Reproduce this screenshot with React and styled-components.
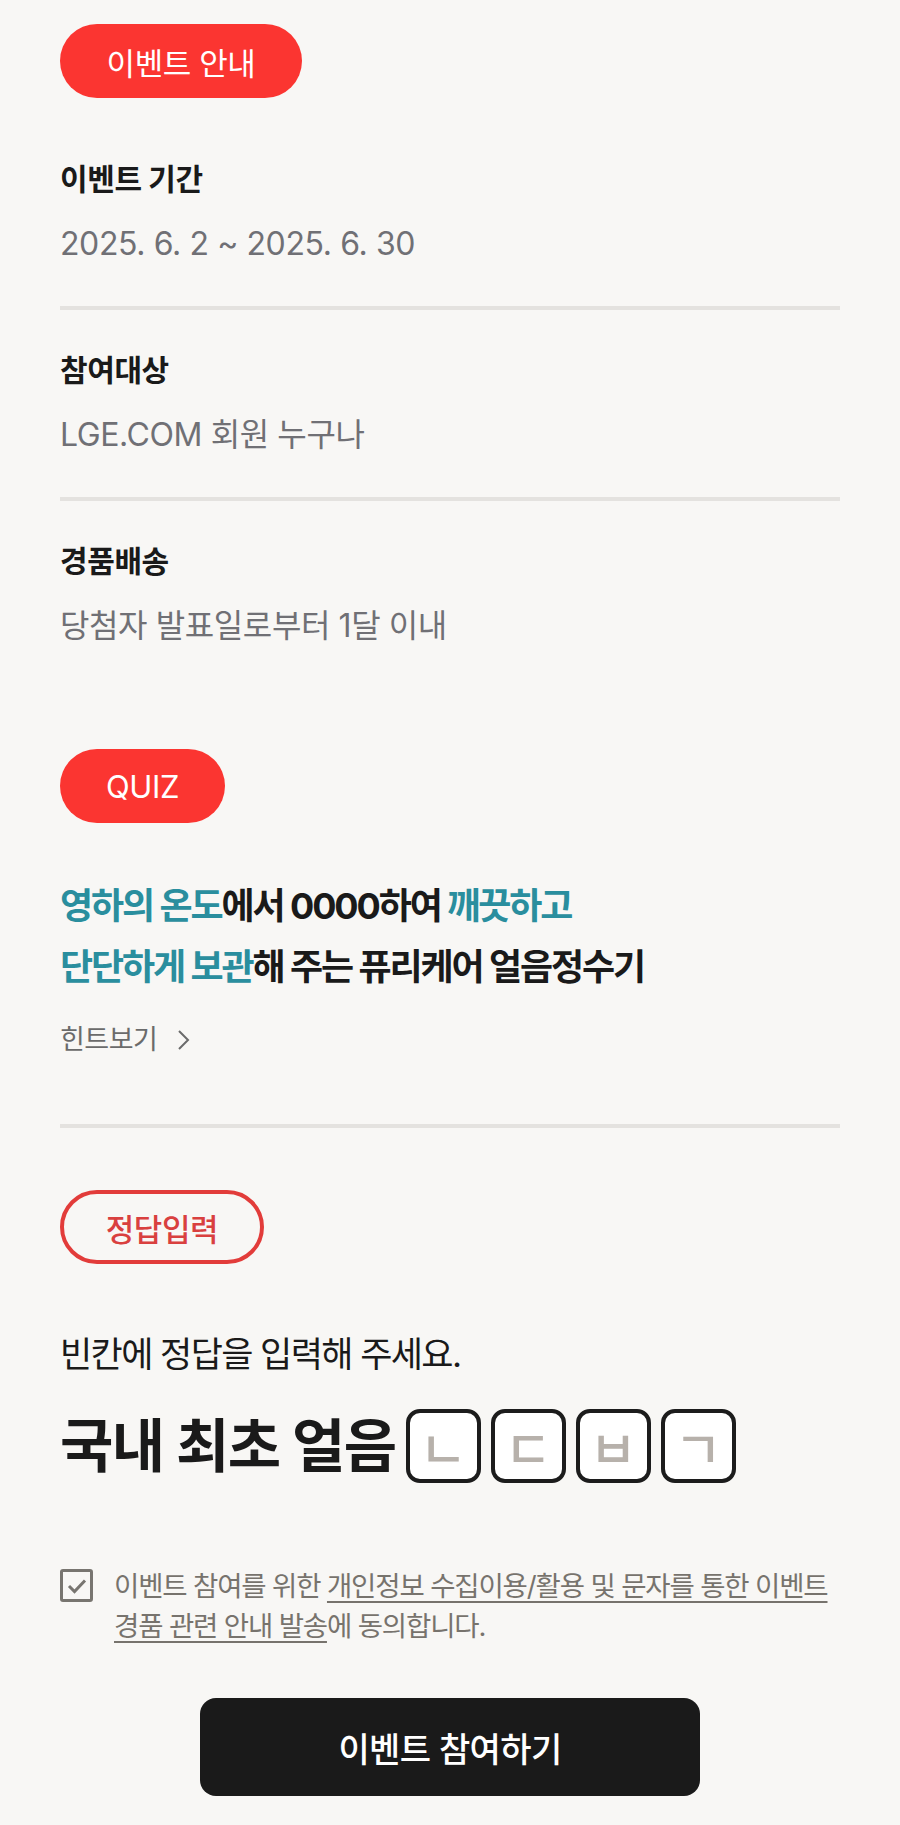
import styled, { createGlobalStyle } from "styled-components";
import { useState } from "react";

const GlobalStyle = createGlobalStyle`
  html, body {
    margin: 0;
    padding: 0;
    background: #f8f7f5;
  }
  body {
    font-family: "Inter", "Noto Sans CJK KR", "Noto Sans", sans-serif;
    color: #1a1a1a;
    word-break: keep-all;
  }
`;

const Page = styled.div`
  width: 900px;
  box-sizing: border-box;
  padding: 24px 60px 31px;
  display: flex;
  flex-direction: column;
`;

const Pill = styled.div`
  align-self: flex-start;
  box-sizing: border-box;
  height: 74px;
  width: ${(p) => p.$width}px;
  border-radius: 37px;
  display: flex;
  align-items: center;
  justify-content: center;
  font-size: 31px;
  letter-spacing: -0.4px;
  background: ${(p) => (p.$outline ? "transparent" : "#fb3531")};
  border: ${(p) => (p.$outline ? "4px solid #e23c3a" : "none")};
  color: ${(p) => (p.$outline ? "#d9403f" : "#fff")};
  font-weight: ${(p) => (p.$outline ? 500 : 400)};
`;

const InfoList = styled.div`
  margin-top: 21px;
  display: flex;
  flex-direction: column;
`;

const InfoItem = styled.div`
  padding: 42px 0;
  border-bottom: ${(p) => (p.$last ? "none" : "4px solid #e4e2df")};
  display: flex;
  flex-direction: column;
  gap: 27px;
`;

const InfoTitle = styled.h3`
  margin: 0;
  font-size: 30px;
  line-height: 36px;
  font-weight: 700;
  letter-spacing: -0.4px;
  color: #1a1a1a;
`;

const InfoText = styled.p`
  margin: 0;
  font-size: 32px;
  line-height: 40px;
  letter-spacing: -0.4px;
  color: #707075;
`;

const QuizSection = styled.section`
  margin-top: 61px;
  display: flex;
  flex-direction: column;
`;

const Question = styled.p`
  margin: 53px 0 0;
  font-size: 36px;
  line-height: 61px;
  font-weight: 700;
  letter-spacing: -2.1px;
  color: #1a1a1a;
`;

const Accent = styled.span`
  color: #2a8e9e;
`;

const HintButton = styled.button`
  align-self: flex-start;
  margin-top: 26px;
  padding: 0;
  border: none;
  background: none;
  display: flex;
  align-items: center;
  gap: 20px;
  font-family: inherit;
  font-size: 27px;
  line-height: 32px;
  letter-spacing: -0.5px;
  color: #6b6b6b;
  cursor: pointer;
`;

const Divider = styled.hr`
  margin: 68px 0 0;
  border: none;
  height: 4px;
  background: #e4e2df;
`;

const AnswerSection = styled.section`
  margin-top: 62px;
  display: flex;
  flex-direction: column;
`;

const Guide = styled.p`
  margin: 70px 0 0;
  font-size: 35px;
  line-height: 40px;
  letter-spacing: -1.6px;
  color: #1a1a1a;
`;

const WordRow = styled.div`
  margin-top: 35px;
  display: flex;
  align-items: center;
  gap: 10px;
`;

const Word = styled.span`
  font-size: 58px;
  font-weight: 700;
  letter-spacing: -1.5px;
  line-height: 74px;
`;

const Blank = styled.span`
  box-sizing: border-box;
  width: 75px;
  height: 74px;
  border: 4px solid #1c1c1c;
  border-radius: 14px;
  background: #fff;
  display: flex;
  align-items: center;
  justify-content: center;
  font-size: 52px;
  font-weight: 500;
  color: #b7b1ab;
`;

const AgreeRow = styled.label`
  margin-top: 83px;
  display: flex;
  align-items: flex-start;
  gap: 21px;
  cursor: pointer;
`;

const CheckBox = styled.span`
  flex: none;
  box-sizing: border-box;
  width: 33px;
  height: 33px;
  margin-top: 3px;
  border: 3px solid #787570;
  border-radius: 3px;
  display: flex;
  align-items: center;
  justify-content: center;
`;

const AgreeText = styled.span`
  font-size: 27.5px;
  line-height: 40px;
  letter-spacing: -1.15px;
  color: #77736d;
`;

const Underline = styled.span`
  text-decoration: underline;
  text-underline-offset: 5px;
  text-decoration-thickness: 2px;
`;

const SubmitButton = styled.button`
  align-self: center;
  margin-top: 52px;
  width: 500px;
  height: 98px;
  border: none;
  border-radius: 16px;
  background: #1a1a1a;
  color: #fff;
  font-family: inherit;
  font-size: 34px;
  font-weight: 500;
  letter-spacing: -0.6px;
  cursor: pointer;
`;

const infoItems = [
  { title: "이벤트 기간", text: "2025. 6. 2 ~ 2025. 6. 30" },
  { title: "참여대상", text: "LGE.COM 회원 누구나" },
  { title: "경품배송", text: "당첨자 발표일로부터 1달 이내" },
];

const blanks = ["ㄴ", "ㄷ", "ㅂ", "ㄱ"];

const App = () => {
  const [agreed, setAgreed] = useState(true);

  return (
    <Page>
      <GlobalStyle />
      <Pill $width={242}>이벤트 안내</Pill>
      <InfoList>
        {infoItems.map((item, i) => (
          <InfoItem key={item.title} $last={i === infoItems.length - 1}>
            <InfoTitle>{item.title}</InfoTitle>
            <InfoText>{item.text}</InfoText>
          </InfoItem>
        ))}
      </InfoList>

      <QuizSection>
        <Pill $width={165}>QUIZ</Pill>
        <Question>
          <Accent>영하의 온도</Accent>에서 0000하여 <Accent>깨끗하고</Accent>
          <br />
          <Accent>단단하게 보관</Accent>해 주는 퓨리케어 얼음정수기
        </Question>
        <HintButton>
          힌트보기
          <svg width="14" height="24" viewBox="0 0 14 24" fill="none">
            <path d="M2 3l9 9-9 9" stroke="#6b6b6b" strokeWidth="2" />
          </svg>
        </HintButton>
      </QuizSection>

      <Divider />

      <AnswerSection>
        <Pill $width={204} $outline>
          정답입력
        </Pill>
        <Guide>빈칸에 정답을 입력해 주세요.</Guide>
        <WordRow>
          <Word>국내 최초 얼음</Word>
          {blanks.map((b) => (
            <Blank key={b}>{b}</Blank>
          ))}
        </WordRow>
      </AnswerSection>

      <AgreeRow onClick={() => setAgreed(!agreed)}>
        <CheckBox>
          {agreed && (
            <svg width="20" height="16" viewBox="0 0 20 16" fill="none">
              <path d="M2 8l5.5 5.5L18 2.5" stroke="#787570" strokeWidth="3" />
            </svg>
          )}
        </CheckBox>
        <AgreeText>
          이벤트 참여를 위한{" "}
          <Underline>
            개인정보 수집이용/활용 및 문자를 통한 이벤트 경품 관련 안내 발송
          </Underline>
          에 동의합니다.
        </AgreeText>
      </AgreeRow>

      <SubmitButton>이벤트 참여하기</SubmitButton>
    </Page>
  );
};

export default App;
